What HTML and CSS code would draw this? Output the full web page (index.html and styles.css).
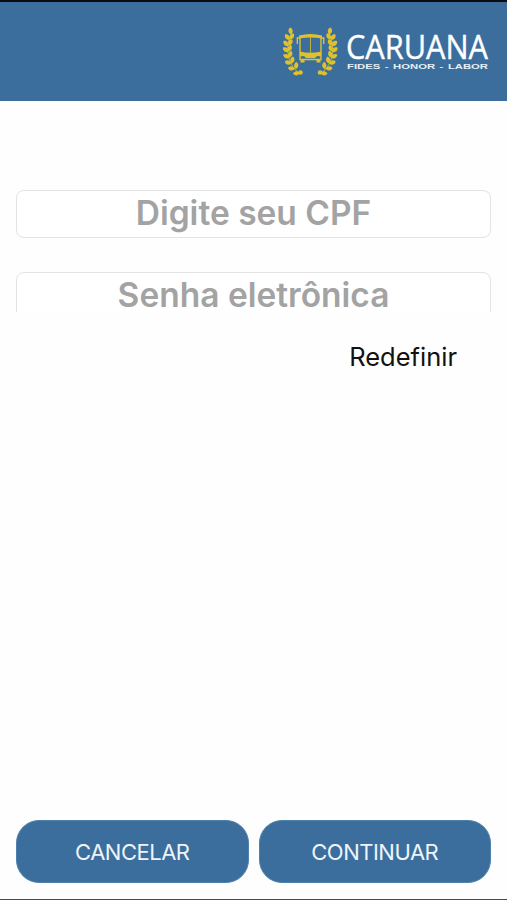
FILE: index.html
```html
<!DOCTYPE html>
<html lang="pt-BR">

<head>
	<meta charset="UTF-8">
	<meta name="viewport" content="width=device-width, initial-scale=1.0">
	<title>Caruana</title>
	<link rel="stylesheet" href="styles.css">
</head>

<body>
	<header class="header">
		<svg class="logo" width="207" height="52" viewBox="0 0 207 52">
			<defs>
				<path id="leaf" d="M0 0C-3.600 .6 -5.800 -2 -5 -5C-2 -5.800 .6 -3.600 0 0Z" />
				<g id="laurel">
					<path class="stem" d="M9 6C2 17 3 36 16 46" />
					<use href="#leaf" transform="translate(8 7.500) rotate(38)" />
					<use href="#leaf" transform="translate(6.500 13) rotate(8)" />
					<use href="#leaf" transform="translate(5.500 19) rotate(0)" />
					<use href="#leaf" transform="translate(5.500 25) rotate(-6)" />
					<use href="#leaf" transform="translate(6.400 31) rotate(-16)" />
					<use href="#leaf" transform="translate(8.500 36.700) rotate(-26)" />
					<use href="#leaf" transform="translate(12 41.800) rotate(-38)" />
					<use href="#leaf" transform="translate(17 46) rotate(-50)" />
					<use href="#leaf" transform="translate(6.800 12.500) rotate(78)" />
					<use href="#leaf" transform="translate(5.600 18.500) rotate(74)" />
					<use href="#leaf" transform="translate(5.300 24.500) rotate(68)" />
					<use href="#leaf" transform="translate(6.300 30.500) rotate(60)" />
					<use href="#leaf" transform="translate(8.800 36.500) rotate(54)" />
					<use href="#leaf" transform="translate(13 42) rotate(48)" />
					<circle cx="17.500" cy="45.500" r="2.300" />
				</g>
			</defs>
			<g class="gold">
				<use href="#laurel" />
				<use href="#laurel" transform="matrix(-1 0 0 1 54.500 0)" />
				<path d="M16 8.500Q27.500 5.500 39 8.500V11.500Q27.500 9.500 16 11.500Z" />
				<path class="frame" d="M17 9V32.500H38V9M16.500 11H14.300V17M38.500 11H40.700V17" />
				<path class="stem" d="M27.500 10V26" />
				<path d="M17 24.500Q27.500 27 38 24.500V29.500L34 29L32 31H23L21 29L17 29.500Z" />
				<path d="M17.500 32H21.500V35.500H17.500ZM33.500 32H37.500V35.500H33.500Z" />
			</g>
			<text class="brand" x="63" y="31.500" textLength="142" lengthAdjust="spacingAndGlyphs">CARUANA</text>
			<text class="motto" x="64" y="42" textLength="141" lengthAdjust="spacingAndGlyphs">FIDES - HONOR - LABOR</text>
		</svg>
	</header>
	<main class="form">
		<input type="text" class="cpf" placeholder="Digite seu CPF">
		<div class="password">
			<input type="password" class="senha" placeholder="Senha eletrônica">
		</div>
		<a class="reset">Redefinir</a>
	</main>
	<div class="buttons">
		<button>CANCELAR</button>
		<button>CONTINUAR</button>
	</div>
</body>

</html>
```
FILE: styles.css
```css
* {
	box-sizing: border-box;
}

body {
	display: flex;
	flex-direction: column;
	height: 900px;
	margin: 0;
	border-top: 2px solid #080b10;
	border-bottom: 1px solid #49494c;
	background-color: #fefefe;
	font-family: Inter, "Liberation Sans", sans-serif;
}

.header {
	display: flex;
	justify-content: flex-end;
	height: 99px;
	padding: 25px 17px 0 0;
	background-color: #3b6e9c;
}

.logo {
	overflow: visible;
}

.gold {
	fill: #dfc12b;
}

.stem {
	fill: none;
	stroke: #dfc12b;
	stroke-width: 0.8;
}

.frame {
	fill: none;
	stroke: #dfc12b;
	stroke-width: 1.4;
}

.brand {
	fill: white;
	stroke: white;
	stroke-width: 0.4;
	font-family: "Open Sans", sans-serif;
	font-size: 32px;
}

.motto {
	fill: #e6eef5;
	font-family: "Liberation Sans", sans-serif;
	font-size: 8px;
	font-weight: bold;
	word-spacing: 1px;
}

.form {
	display: flex;
	flex: 1;
	flex-direction: column;
	padding: 89px 16px 0;
}

input {
	display: block;
	width: 100%;
	height: 48px;
	padding: 0 0 3px;
	border: 1px solid #e3e3e3;
	border-radius: 8px;
	background-color: white;
	font-family: inherit;
	font-size: 33.5px;
	font-weight: 600;
	text-align: center;
}

input::placeholder {
	color: #a3a3a3;
	opacity: 1;
}

.password {
	height: 40px;
	margin-top: 34px;
	overflow: hidden;
}

.reset {
	align-self: flex-end;
	margin: 29px 34px 0 0;
	color: #111;
	font-size: 25.5px;
	line-height: 32px;
}

.buttons {
	display: flex;
	gap: 10px;
	padding: 0 16px 16px;
}

button {
	flex: 1;
	height: 63px;
	border: 1px solid #4c82ad;
	border-radius: 23px;
	background-color: #3b6e9c;
	color: #edf4fa;
	font-family: inherit;
	font-size: 22px;
	letter-spacing: -0.5px;
}
```
